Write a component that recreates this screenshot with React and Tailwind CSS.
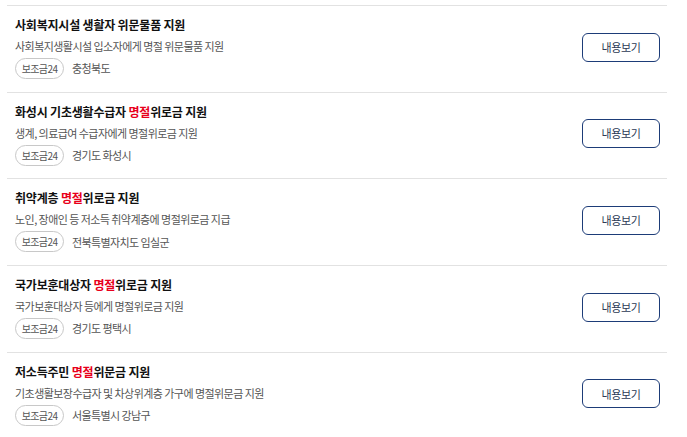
const items = [
  {
    title: [{ t: "사회복지시설 생활자 위문물품 지원" }],
    desc: "사회복지생활시설 입소자에게 명절 위문물품 지원",
    region: "충청북도",
  },
  {
    title: [{ t: "화성시 기초생활수급자 " }, { t: "명절", red: true }, { t: "위로금 지원" }],
    desc: "생계, 의료급여 수급자에게 명절위로금 지원",
    region: "경기도 화성시",
  },
  {
    title: [{ t: "취약계층 " }, { t: "명절", red: true }, { t: "위로금 지원" }],
    desc: "노인, 장애인 등 저소득 취약계층에 명절위로금 지급",
    region: "전북특별자치도 임실군",
  },
  {
    title: [{ t: "국가보훈대상자 " }, { t: "명절", red: true }, { t: "위로금 지원" }],
    desc: "국가보훈대상자 등에게 명절위로금 지원",
    region: "경기도 평택시",
  },
  {
    title: [{ t: "저소득주민 " }, { t: "명절", red: true }, { t: "위문금 지원" }],
    desc: "기초생활보장수급자 및 차상위계층 가구에 명절위문금 지원",
    region: "서울특별시 강남구",
  },
];

function Row({ item }) {
  return (
    <li className="flex items-center justify-between border-t border-[#e2e2e2] pl-[8px] pr-[7px] pt-[9px] pb-[12.7px]">
      <div className="flex flex-col">
        <h3 className="text-[12px] leading-[20px] font-bold text-[#111] tracking-[-0.2px]">
          {item.title.map((p, i) => (
            <span key={i} className={p.red ? "text-[#e8001c]" : ""}>
              {p.t}
            </span>
          ))}
        </h3>
        <p className="mt-[2px] text-[11px] leading-[18px] text-[#555] tracking-[-0.55px]">{item.desc}</p>
        <div className="mt-[3px] flex items-center gap-[8px]">
          <span className="inline-flex h-[21px] w-[49px] items-center justify-center rounded-full border border-[#c8c8c8] text-[10px] text-[#555] tracking-[-0.6px]">
            보조금24
          </span>
          <span className="text-[11px] text-[#555] tracking-[-0.6px]">{item.region}</span>
        </div>
      </div>
      <button className="h-[29px] w-[78px] rounded-[6px] border-[1.5px] border-[#1d3c78] bg-white text-[11px] text-[#2b3a55] tracking-[-0.4px]">
        내용보기
      </button>
    </li>
  );
}

export default function App() {
  return (
    <div
      className="h-[437px] w-[687px] overflow-hidden bg-white pt-[5px]"
      style={{ fontFamily: '"Noto Sans CJK KR", "Noto Sans", sans-serif' }}
    >
      <ul className="ml-[7px] w-[660px]">
        {items.map((item, i) => (
          <Row key={i} item={item} />
        ))}
      </ul>
    </div>
  );
}
